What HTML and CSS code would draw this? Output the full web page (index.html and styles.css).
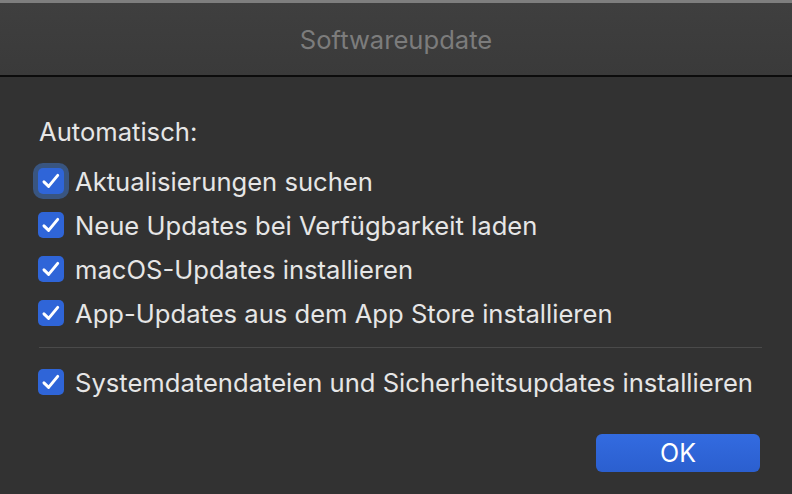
FILE: index.html
```html
<!DOCTYPE html>
<html>
<head>
<meta charset="utf-8">
<link rel="stylesheet" href="styles.css">
</head>
<body>
<div class="window">
  <div class="titlebar"><span class="title">Softwareupdate</span></div>
  <div class="content">
    <div class="heading">Automatisch:</div>
    <div class="rows">
      <label class="row"><span class="cb focus"><svg viewBox="0 0 24 24"><path d="M5.5 12.8 L9.8 17 L18.2 6.8"/></svg></span><span class="label">Aktualisierungen suchen</span></label>
      <label class="row"><span class="cb"><svg viewBox="0 0 24 24"><path d="M5.5 12.8 L9.8 17 L18.2 6.8"/></svg></span><span class="label">Neue Updates bei Verfügbarkeit laden</span></label>
      <label class="row"><span class="cb"><svg viewBox="0 0 24 24"><path d="M5.5 12.8 L9.8 17 L18.2 6.8"/></svg></span><span class="label">macOS-Updates installieren</span></label>
      <label class="row"><span class="cb"><svg viewBox="0 0 24 24"><path d="M5.5 12.8 L9.8 17 L18.2 6.8"/></svg></span><span class="label">App-Updates aus dem App Store installieren</span></label>
    </div>
    <div class="sep"></div>
    <label class="row"><span class="cb"><svg viewBox="0 0 24 24"><path d="M5.5 12.8 L9.8 17 L18.2 6.8"/></svg></span><span class="label">Systemdatendateien und Sicherheitsupdates installieren</span></label>
    <div class="actions"><button class="ok">OK</button></div>
  </div>
</div>
</body>
</html>
```
FILE: styles.css
```css
html, body { margin: 0; padding: 0; }
body {
  width: 792px; height: 494px; overflow: hidden;
  background: #323232;
  font-family: Inter, "Noto Sans", sans-serif;
}
.window { display: flex; flex-direction: column; height: 494px; }
.titlebar {
  height: 72px;
  border-top: 3px solid #7e7e7e;
  border-bottom: 2px solid #0c0c0c;
  background: linear-gradient(#3f3f3f, #3a3a3a);
  display: flex; align-items: center; justify-content: center;
}
.title { color: #7c7c7c; font-size: 25.6px; }
.content { padding: 40px 32px 0 38px; color: #e6e6e6; }
.heading { font-size: 25.6px; line-height: 30px; margin-bottom: 20px; padding-left: 1px; }
.rows { display: flex; flex-direction: column; gap: 16px; }
.row { display: flex; align-items: center; gap: 11px; height: 28px; font-size: 25.6px; }
.cb {
  width: 26px; height: 26px; border-radius: 5px; box-sizing: border-box; flex: none;
  background: #2f65d8; display: flex; align-items: center; justify-content: center;
}
.cb.focus { box-shadow: 0 0 0 5px rgba(62,108,180,0.6); }
.cb svg { width: 26px; height: 26px; }
.cb path { fill: none; stroke: #fff; stroke-width: 2.7; stroke-linecap: round; stroke-linejoin: round; }
.sep { height: 1px; background: #4a4a4a; margin: 20px 0 20px 1px; width: 723px; }
.actions { display: flex; justify-content: flex-end; margin-top: 38px; }
.ok {
  width: 164px; height: 38px; border: none; border-radius: 6px;
  background: linear-gradient(#336be0, #2b5fcf);
  color: #fff; font-family: inherit; font-size: 25px;
}
```
